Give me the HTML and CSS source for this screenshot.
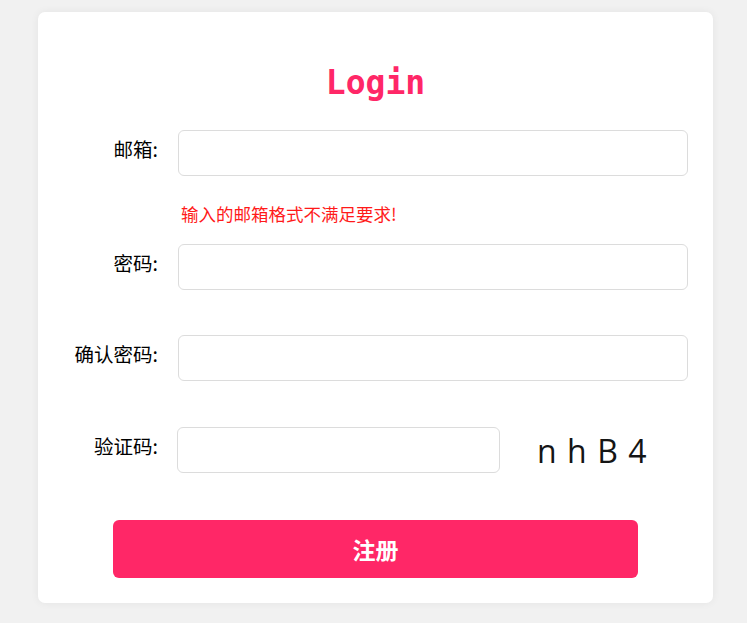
FILE: index.html
```html
<!DOCTYPE html>
<html lang="zh-CN">
  <head>
    <meta charset="UTF-8" />
    <title>Login</title>
    <link rel="stylesheet" href="styles.css">
  </head>

  <body>
    <div id="login-card">
      <h1 id="login-title">Login</h1>

      <div class="form-row">
        <label class="form-label" for="email">邮箱:</label>
        <input type="text" id="email" class="form-input" />
      </div>
      <div class="form-error">输入的邮箱格式不满足要求!</div>

      <div class="form-row">
        <label class="form-label" for="password">密码:</label>
        <input type="password" id="password" class="form-input" />
      </div>

      <div class="form-row">
        <label class="form-label" for="confirm">确认密码:</label>
        <input type="password" id="confirm" class="form-input" />
      </div>

      <div class="form-row code-row">
        <label class="form-label" for="code">验证码:</label>
        <input type="text" id="code" class="form-input code-input" />
        <div class="captcha">nhB4</div>
      </div>

      <button id="register-btn">注册</button>
    </div>
  </body>
</html>
```

FILE: styles.css
```css
html {
  box-sizing: border-box;
  font-size: 16px;
  font-family: "Noto Sans CJK SC", "Noto Sans", sans-serif;
}
*,
*:before,
*:after {
  box-sizing: inherit;
}

body {
  margin: 0;
  padding: 12px 0 20px 38px;
  background-color: #f1f1f1;
}

#login-card {
  width: 675px;
  padding: 50px 25px 25px 0;
  background-color: white;
  border-radius: 7px;
  box-shadow: 0 0 8px rgba(0, 0, 0, 0.06);
  display: flex;
  flex-direction: column;
}

#login-title {
  margin: 0 0 28px 25px;
  height: 40px;
  line-height: 42px;
  text-align: center;
  font-family: "DejaVu Sans Mono", monospace;
  font-size: 33px;
  font-weight: bold;
  color: #ff2767;
}

.form-row {
  display: flex;
  align-items: flex-start;
  height: 46px;
  margin-bottom: 45px;
}

.code-row {
  margin-top: 1px;
}

.form-label {
  width: 120px;
  margin-right: 20px;
  padding-top: 5px;
  text-align: right;
  font-size: 19.5px;
  line-height: 28px;
  color: black;
}

.form-input {
  flex: 1;
  height: 46px;
  border: 1px solid #dcdcdc;
  border-radius: 6px;
  padding: 0 12px;
  font-size: 16px;
  outline: none;
}

.code-input {
  flex: none;
  width: 323px;
  margin-left: -1px;
}

.captcha {
  flex: 1;
  padding-top: 2px;
  text-align: center;
  font-family: "Open Sans", sans-serif;
  font-size: 32px;
  line-height: 44px;
  letter-spacing: 10.5px;
  text-indent: 6px;
  color: #151515;
}

.form-error {
  margin: -17px 0 20px 143px;
  height: 20px;
  line-height: 20px;
  font-size: 17.5px;
  color: #ff1a1a;
}

#register-btn {
  align-self: center;
  width: 525px;
  height: 58px;
  margin: 2px 0 0 25px;
  border: none;
  border-radius: 6px;
  background-color: #ff2767;
  color: white;
  font-family: "Noto Sans CJK SC", sans-serif;
  font-size: 23px;
  font-weight: bold;
  cursor: pointer;
}
```
